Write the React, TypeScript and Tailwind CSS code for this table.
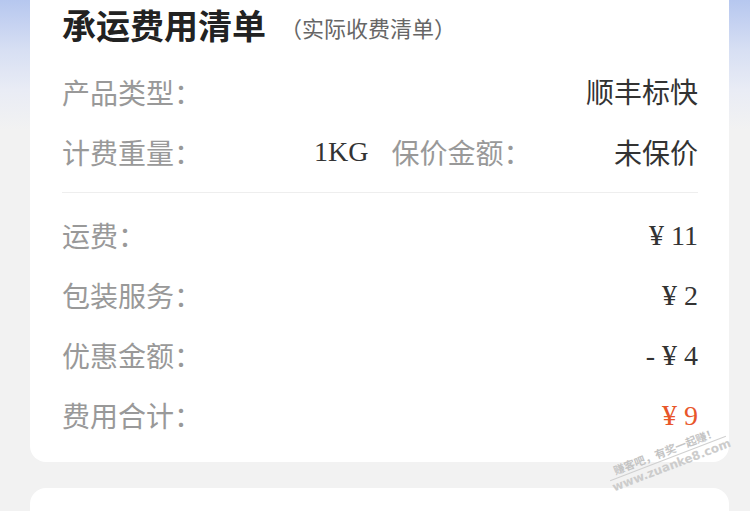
import React from 'react';

const sans = "font-['Noto_Sans_CJK_SC','Noto_Sans',sans-serif]";
const serif = "font-['Liberation_Serif','Noto_Sans_CJK_SC',serif]";

const FeeRow = ({ label, value, orange = false }) => {
  return (
    <div className="h-[60px] flex items-center justify-between">
      <span className="text-[28px] text-[#999999] leading-none">{label}</span>
      <span className={`${serif} text-[28px] leading-none ${orange ? 'text-[#e8562a]' : 'text-[#333333]'}`}>
        {value}
      </span>
    </div>
  );
};

const App = () => {
  return (
    <div
      className={`${sans} relative w-[750px] h-[511px] overflow-hidden bg-[#f2f2f2] bg-[linear-gradient(180deg,#b6c7ef_0px,#d7dff3_50px,#e9ecf5_90px,#f2f2f2_130px)]`}
    >
      <div className="mx-[30px] w-[699px] bg-white rounded-b-[16px] pl-[32px] pr-[31px] pb-[17px]">
        <div className="h-[50px] flex items-center">
          <span className="text-[34px] font-bold text-[#222222] leading-none">承运费用清单</span>
          <span className="ml-[14px] mt-[4px] text-[22px] text-[#666666] leading-none">（实际收费清单）</span>
        </div>

        <div className="mt-[12px]">
          <FeeRow label="产品类型：" value={<span className={`${sans} text-[28px]`}>顺丰标快</span>} />
          <div className="h-[60px] grid grid-cols-2 gap-x-[23px]">
            <div className="flex items-center justify-between">
              <span className="text-[28px] text-[#999999] leading-none">计费重量：</span>
              <span className={`${serif} text-[28px] text-[#333333] leading-none`}>1KG</span>
            </div>
            <div className="flex items-center justify-between">
              <span className="text-[28px] text-[#999999] leading-none">保价金额：</span>
              <span className="text-[28px] text-[#333333] leading-none">未保价</span>
            </div>
          </div>
        </div>

        <div className="mt-[10px] h-px bg-[#eeeeee]" />

        <div className="mt-[12px]">
          <FeeRow label="运费：" value={<><span className="text-[30px]">¥</span> 11</>} />
          <FeeRow label="包装服务：" value={<><span className="text-[30px]">¥</span> 2</>} />
          <FeeRow label="优惠金额：" value={<>- <span className="text-[30px]">¥</span> 4</>} />
          <FeeRow label="费用合计：" value={<><span className="text-[30px]">¥</span> 9</>} orange />
        </div>
      </div>

      <div className="mx-[30px] mt-[26px] w-[699px] h-[60px] bg-white rounded-t-[16px]" />

      <div className="absolute left-[606px] top-[443px] w-[124px] -rotate-[21deg] text-center pointer-events-none">
        <div className="text-[11px] leading-[14px] font-bold text-[#c4c4c4] border-b border-[#d0d0d0] pb-[1px]">
          赚客吧，有奖一起赚！
        </div>
        <div className="font-['DejaVu_Sans',sans-serif] text-[12px] leading-[15px] font-bold text-[#cccccc]">
          www.zuanke8.com
        </div>
      </div>
    </div>
  );
};

export default App;
